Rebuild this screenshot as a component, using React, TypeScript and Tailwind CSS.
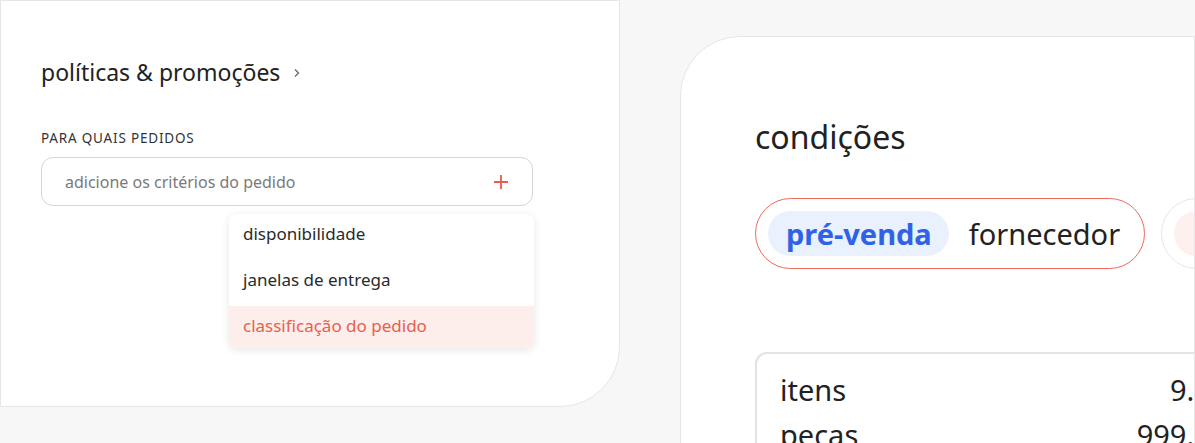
import React from "react";

export default function App() {
  return (
    <div
      className="w-[1195px] h-[443px] overflow-hidden bg-[#f7f7f7] relative flex"
      style={{ fontFamily: "'Noto Sans', Lato, sans-serif" }}
    >
      {/* Left panel */}
      <div className="w-[620px] h-[407px] shrink-0 bg-white border border-[#e6e6e6] rounded-br-[60px] pl-[40px] pt-[57px]">
        <div className="flex items-center gap-[12px]">
          <span className="text-[23px] text-[#222] leading-[28px]">políticas &amp; promoções</span>
          <svg width="10" height="10" viewBox="0 0 10 10" className="mt-[2px]">
            <path d="M3 1.5 L6.5 5 L3 8.5" fill="none" stroke="#666" strokeWidth="1.3" />
          </svg>
        </div>
        <div className="mt-[43px] text-[13.5px] tracking-[0.06em] text-[#333] leading-[18px]">PARA QUAIS PEDIDOS</div>
        <div className="mt-[10px] w-[492px] h-[49px] border border-[#d6d6d6] rounded-[12px] flex items-center justify-between pl-[23px] pr-[22px]">
          <span className="text-[16px] text-[#7a7a7a]">adicione os critérios do pedido</span>
          <svg width="18" height="18" viewBox="0 0 18 18">
            <path d="M9 2 V16 M2 9 H16" stroke="#ea5b4a" strokeWidth="1.8" />
          </svg>
        </div>
        <div className="ml-[188px] mt-[8px] w-[305px] bg-white rounded-[8px] shadow-[0_2px_8px_rgba(0,0,0,0.10)] overflow-hidden flex flex-col gap-[6px]">
          <div className="h-[40px] flex items-center px-[14px] text-[17px] text-[#2a2a2a]">disponibilidade</div>
          <div className="h-[40px] flex items-center px-[14px] text-[17px] text-[#2a2a2a]">janelas de entrega</div>
          <div className="h-[42px] pb-[2px] flex items-center px-[14px] text-[17px] text-[#e8604c] bg-[#fdeeeb]">classificação do pedido</div>
        </div>
      </div>

      {/* Right panel */}
      <div className="ml-[60px] mt-[36px] flex-1 h-[500px] bg-white border border-[#e6e6e6] rounded-tl-[60px] pl-[74px] pt-[80px] overflow-hidden">
        <div className="text-[32px] text-[#222] leading-[40px]">condições</div>
        <div className="mt-[41px] flex items-center gap-[16px]">
          <div className="h-[71px] border-[1.5px] border-[#ee6a5c] rounded-full flex items-center pl-[12px] pr-[24px] gap-[20px] shrink-0">
            <div className="h-[45px] pl-[18px] pr-[17px] rounded-full bg-[#e9f0fe] flex items-center text-[29px] font-bold text-[#2f62e6]">pré-venda</div>
            <div className="text-[29px] text-[#222]">fornecedor</div>
          </div>
          <div className="h-[71px] w-[120px] border-[1.5px] border-[#e6e6e6] rounded-full flex items-center pl-[12px] shrink-0">
            <div className="h-[45px] w-[60px] rounded-full bg-[#fdf0ee]" />
          </div>
        </div>
        <div className="mt-[83px] w-[520px] border-2 border-[#e3e3e3] rounded-[12px] pl-[23px] pt-[16px]">
          <div className="flex justify-between items-center h-[40px] pr-[29px]">
            <span className="text-[29px] text-[#222]">itens</span>
            <span className="text-[29px] text-[#222]">9.999</span>
          </div>
          <div className="flex justify-between items-center h-[50px] pr-[29px]">
            <span className="text-[29px] text-[#222]">peças</span>
            <span className="text-[29px] text-[#222]">999.999</span>
          </div>
        </div>
      </div>
    </div>
  );
}
